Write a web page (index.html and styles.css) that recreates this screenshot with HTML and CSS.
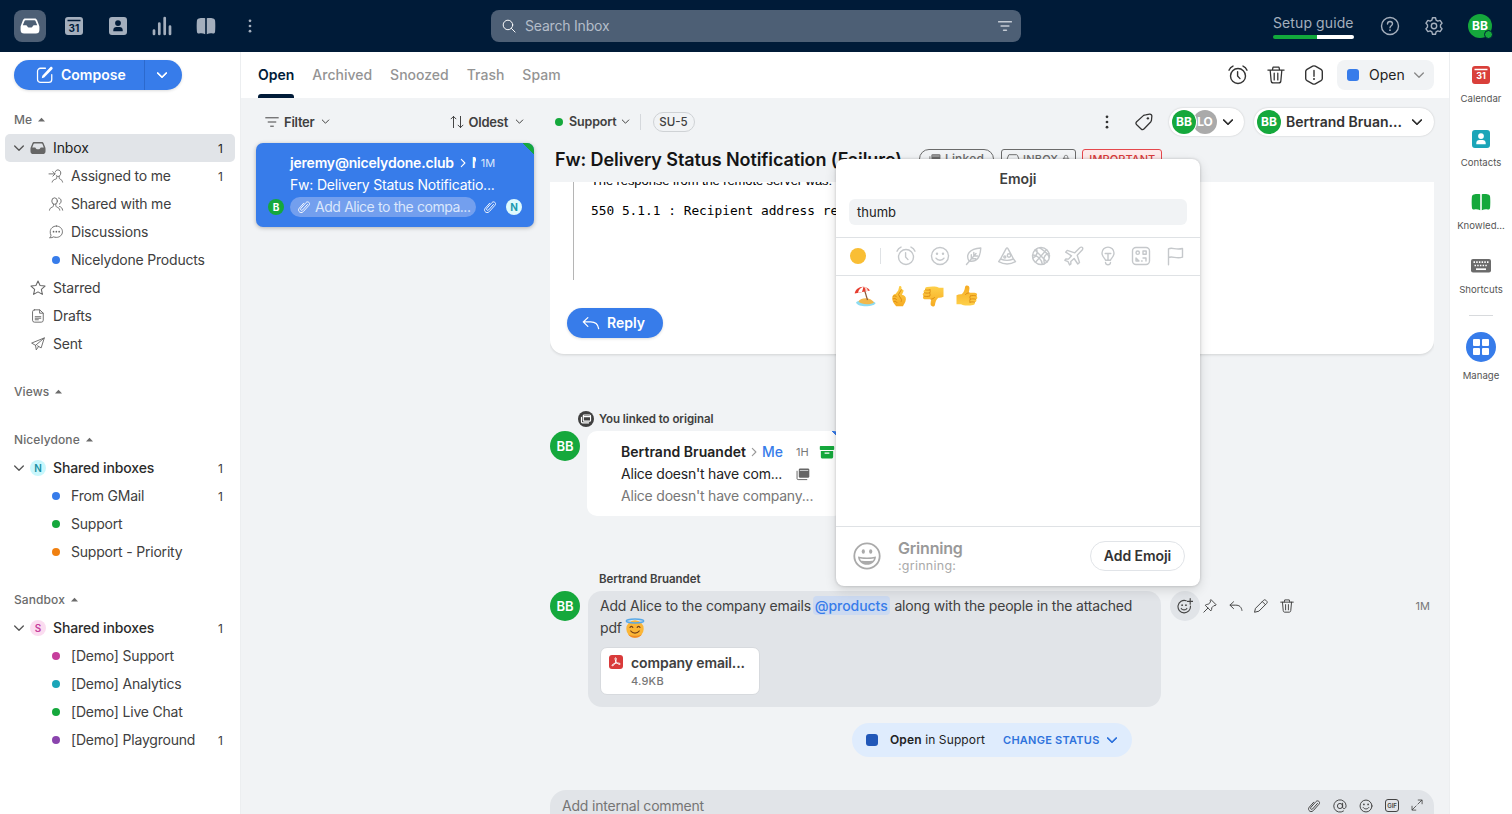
FILE: index.html
```
<!DOCTYPE html>
<html lang="en">
<head>
<meta charset="utf-8">
<title>Inbox</title>
<link rel="stylesheet" href="styles.css">
</head>
<body>
<svg class="defs" width="0" height="0">
  <linearGradient id="skin" x1="0" y1="0" x2="0" y2="1"><stop offset="0" stop-color="#fed04a"/><stop offset="1" stop-color="#f6ab22"/></linearGradient>
  <symbol id="chev" viewBox="0 0 10 10"><path class="cv" d="M1.400 3.300 5 6.900l3.600-3.600"/></symbol>
  <symbol id="caret" viewBox="0 0 8 5"><path class="f" d="M.5 4.600 4 .7l3.500 3.900z"/></symbol>
  <symbol id="tray" viewBox="0 0 20 20"><path class="f" fill-rule="evenodd" d="M5.200 2.500h9.600c1 0 1.800.6 2.200 1.500l2 5.200c.3.600.4 1.200.4 1.800v3a3.500 3.500 0 0 1-3.500 3.500H4.100A3.500 3.500 0 0 1 .6 14v-3c0-.6.1-1.200.4-1.800L3 4c.4-.9 1.200-1.500 2.200-1.500zm.3 1.800c-.5 0-.8.3-1 .7L2.800 9.300h3c.9 0 1.300.6 1.600 1.200.3.700.8 1 1.400 1h2.400c.6 0 1.100-.3 1.400-1 .3-.6.7-1.200 1.600-1.200h3L15.500 5c-.2-.4-.5-.7-1-.7z"/></symbol>
  <symbol id="cal" viewBox="0 0 20 20"><path class="f" fill-rule="evenodd" d="M4 1h12a3 3 0 0 1 3 3v12a3 3 0 0 1-3 3H4a3 3 0 0 1-3-3V4a3 3 0 0 1 3-3zM3.500 3.800v1.400h13V3.800z"/></symbol>
  <symbol id="contact" viewBox="0 0 20 20"><path class="f" fill-rule="evenodd" d="M4 1h12a3 3 0 0 1 3 3v12a3 3 0 0 1-3 3H4a3 3 0 0 1-3-3V4a3 3 0 0 1 3-3zm6 3.200a2.900 2.900 0 1 0 0 5.800 2.900 2.900 0 0 0 0-5.800zM5.300 15.300h9.400v-1.200c0-1.800-1.300-3-3-3H8.300c-1.700 0-3 1.200-3 3z"/></symbol>
  <symbol id="bars" viewBox="0 0 20 20"><path d="M2 14.500v3.500M7.300 7.500V18M12.700 2v16M18 10.500V18"/></symbol>
  <symbol id="book" viewBox="0 0 20 20"><path class="f" d="M9.200 2.300v15.900c-1.800-.8-3.800-1-6-.7C1.700 17.700 1.100 17 .9 15.500.6 12 .6 8 .9 4.800c.1-1.300.8-2.200 2-2.400 2.300-.4 4.700-.5 6.300-.1zM10.800 2.300v15.900c1.800-.8 3.800-1 6-.7 1.500.2 2.100-.5 2.300-2 .3-3.500.3-7.500 0-10.700-.1-1.300-.8-2.200-2-2.400-2.300-.4-4.700-.5-6.300-.1z"/></symbol>
  <symbol id="dots" viewBox="0 0 20 20"><g class="f"><circle cx="10" cy="3.500" r="1.700"/><circle cx="10" cy="10" r="1.700"/><circle cx="10" cy="16.500" r="1.700"/></g></symbol>
  <symbol id="search" viewBox="0 0 20 20"><circle cx="8.500" cy="8.500" r="6.800"/><path d="m13.500 13.500 5.200 5.200"/></symbol>
  <symbol id="filter" viewBox="0 0 20 20"><path d="M1 4h18M4.500 10h11M8 16h4"/></symbol>
  <symbol id="help" viewBox="0 0 20 20"><circle cx="10" cy="10" r="8.500"/><path d="M7.500 8C7.500 6.500 8.500 5.500 10 5.500s2.500 1 2.500 2.300c0 2-2.500 2-2.500 4"/><circle class="f" cx="10" cy="14.200" r=".9"/></symbol>
  <symbol id="gear" viewBox="0 0 20 20"><path d="M8.500 1.800h3l.6 2.300 1.700 1 2.300-.7 1.900 2.800-1.500 1.700v2.200l1.500 1.700-1.900 2.800-2.300-.7-1.700 1-.6 2.300h-3l-.6-2.300-1.700-1-2.300.7L2 12.800l1.500-1.700V8.900L2 7.200l1.900-2.800 2.300.7 1.700-1z"/><circle cx="10" cy="10" r="2.700"/></symbol>
  <symbol id="compose" viewBox="0 0 20 20"><path d="M10.500 2.500H5A3.300 3.300 0 0 0 1.700 5.800V15A3.300 3.300 0 0 0 5 18.300h9.200a3.300 3.300 0 0 0 3.300-3.300V9.500"/><path class="f" d="m7 10.800 8.800-9.400c.6-.7 1.500-.7 2.200-.1.700.7.700 1.600.1 2.300l-9 9.100-2.700.9z"/></symbol>
  <symbol id="assign" viewBox="0 0 20 20"><path d="M9 4.200C9.500 2.300 10.900 1.300 12.700 1.300c2.400 0 4.100 1.800 4.100 4.400 0 2.900-1.700 5-3.900 5-1 0-1.900-.5-2.600-1.200M0 7h8.500M5.500 3.800 8.700 7l-3.200 3.200M4.500 18.700c.5-2.200 2.300-3.700 5-4.200 1.600-.3 1.800-1.500 1.400-3M14.600 11c-.3 2 .1 3.200 1.600 3.700 1.700.5 2.800 1.900 3.200 4"/></symbol>
  <symbol id="people" viewBox="0 0 20 20"><ellipse cx="8" cy="5.800" rx="4" ry="4.600"/><path d="M.7 18.800c.3-2.500 1.700-3.600 3.700-4.200 1.700-.5 2.200-1.500 2-4M9.700 10.600c-.2 2.500.3 3.500 2 4 2 .6 3.400 1.700 3.700 4.200M13.700 1.400c2.300.3 3.600 2 3.600 4.300 0 2.100-1 3.700-2.500 4.500M15 13.500c2.500.6 4 2.300 4.500 5.300"/></symbol>
  <symbol id="chat" viewBox="0 0 20 20"><path d="M10.500 1.500c4.900 0 8.700 3.500 8.700 8.100s-3.800 8.100-8.700 8.100c-1.500 0-2.700-.3-3.900-.8-1.300 1-3.200 1.500-5.800 1.300 1.400-1 2.100-2.300 2-3.800a8 8 0 0 1-1-4.800c0-4.600 3.800-8.100 8.700-8.100z"/><g class="f"><circle cx="6.500" cy="9.500" r="1.200"/><circle cx="10.500" cy="9.500" r="1.200"/><circle cx="14.500" cy="9.500" r="1.200"/></g></symbol>
  <symbol id="star" viewBox="0 0 20 20"><path d="m10 1.200 2.600 5.700 6.200.7-4.600 4.200 1.300 6.200-5.500-3.100L4.500 18l1.300-6.200L1.200 7.600l6.200-.7z"/></symbol>
  <symbol id="doc" viewBox="0 0 20 20"><path d="M5 1.200h7.500L17.500 6v10a2.800 2.800 0 0 1-2.800 2.800H5A2.800 2.800 0 0 1 2.200 16V4A2.800 2.800 0 0 1 5 1.200zM12.300 1.400V6h5M6 11h8M6 13.200h8M6 15.400h4.500"/></symbol>
  <symbol id="plane" viewBox="0 0 20 20"><path d="M19 1.300.9 8.700l5.600 3.200L19 1.300l-4.500 14.300-5.200-3M6.500 11.900l1 6.500 3.300-4.800"/></symbol>
  <symbol id="alarm" viewBox="0 0 20 20"><circle cx="10" cy="11" r="7.500"/><path d="M9.600 6.800V11l2.400 2.600M1 5.200C1.800 3.200 3.100 1.900 5 1.100M19 5.200c-.8-2-2.100-3.300-4-4.100"/></symbol>
  <symbol id="trash" viewBox="0 0 20 20"><path d="M1 4.500h18M6 4.500l.7-3.200h6.600l.7 3.200M3.500 4.500l1.100 12c.1 1.500.9 2.300 2.300 2.300h6.200c1.400 0 2.200-.8 2.300-2.300l1.100-12M8 8v7.500M12 8v7.500"/></symbol>
  <symbol id="spam" viewBox="0 0 20 20"><path d="M8.700 1.200 3 4.300c-.8.5-1.300 1.200-1.300 2.200v7c0 1 .5 1.700 1.300 2.200l5.700 3.100c.9.500 1.700.5 2.600 0l5.700-3.100c.8-.5 1.300-1.200 1.300-2.200v-7c0-1-.5-1.700-1.300-2.200l-5.700-3.100c-.9-.5-1.700-.5-2.600 0zM10 5.500v5.700"/><circle class="f" cx="10" cy="14" r="1"/></symbol>
  <symbol id="sort" viewBox="0 0 20 20"><path d="M5 18V2M1.500 5.500 5 2l3.500 3.500M15 2v16M11.500 14.500 15 18l3.500-3.500"/></symbol>
  <symbol id="clip" viewBox="0 0 20 20"><path d="m15 6.300-7 7.900c-1.600 1.700-4-.4-2.500-2.200l7.300-8.300c2.700-2.900 6.900.8 4.300 3.800l-8 9C5.400 20.500-.3 15.600 3.400 11.500L9.500 4.600"/></symbol>
  <symbol id="tag" viewBox="0 0 20 20"><path d="m11.800 2 4.400-.7c1.600-.2 2.700.9 2.500 2.500L18.300 8c-.1.800-.4 1.400-.9 2l-7.200 7.500c-1.100 1.100-2.300 1.200-3.400.2l-4.900-4.600c-1.100-1.100-1.100-2.300-.1-3.400l7.500-6.800c.7-.5 1.500-.8 2.500-.9z"/><circle class="f" cx="14.300" cy="5.900" r="1.300"/></symbol>
  <symbol id="reply" viewBox="0 0 20 20"><path d="M6.500 4 1.400 8.800l5.100 4.900M1.600 8.800h8.100c5 0 8 2.400 8.800 7.500"/></symbol>
  <symbol id="stack" viewBox="0 0 20 20"><path class="f" d="M6 2h11a2 2 0 0 1 2 2v9.500a2 2 0 0 1-2 2H6a2 2 0 0 1-2-2V4a2 2 0 0 1 2-2z"/><path class="cut" d="M6 5h11"/><path d="M1.500 6v10.500c0 1 .6 1.500 1.500 1.500h12.500"/></symbol>
  <symbol id="link" viewBox="0 0 20 20"><circle class="f" cx="10" cy="10" r="10"/><path class="w" d="M7.800 5h6.700c.8 0 1.200.5 1.200 1.200v5.300c0 .8-.5 1.200-1.200 1.200H7.800c-.8 0-1.200-.5-1.200-1.200V6.200C6.600 5.400 7.100 5 7.800 5zM4.300 8v5.500c0 .8.500 1.300 1.300 1.300h7.700M7 7h8.500"/></symbol>
  <symbol id="archive" viewBox="0 0 20 20"><path class="f" fill-rule="evenodd" d="M2 2.500h16c.7 0 1 .4 1 1v3c0 .6-.3 1-1 1H2c-.7 0-1-.4-1-1v-3c0-.6.300-1 1-1zM2.300 8.800h15.400v7c0 1.400-.8 2.200-2.200 2.200h-11c-1.400 0-2.200-.8-2.200-2.200zM7 10.500v1.800h6v-1.800z"/></symbol>
  <symbol id="smile" viewBox="0 0 20 20"><circle cx="10" cy="10" r="8.500"/><path d="M6 12.200c1.700 2.800 6.300 2.800 8 0"/><g class="f"><circle cx="7" cy="7.800" r="1.200"/><circle cx="13" cy="7.800" r="1.200"/></g></symbol>
  <symbol id="leaf" viewBox="0 0 20 20"><path d="M3.500 18.500 13 7.500M6 15C2.500 9 6 2.800 17.800 2 17.300 11 14 16.500 6 15zM8.300 8.800v3.900l4.300.1M10.800 6.500V10h3.700"/></symbol>
  <symbol id="pizza" viewBox="0 0 20 20"><path d="M9 2.800c.7-1.200 1.400-1.200 2.100 0L16.500 13c-4.200 1.800-8.800 1.800-13 0zM3.500 13l-1.800 2.600c5.200 2.900 11.600 2.900 16.800 0L16.500 13"/><circle cx="12" cy="9.500" r="1.700"/><circle cx="7.800" cy="11" r="1"/></symbol>
  <symbol id="ball" viewBox="0 0 20 20"><circle cx="10" cy="10" r="8.500"/><path d="m4 4 12 12M15.500 3.700 4.500 16.300M8.500 1.700C13.500 5 17.800 9.500 18.300 11.500M1.700 9C6 9 10.800 13 11.300 18.300M5.500 3C7 7 6 10 1.700 12M18.100 7.500c-4.700.5-6.100 4.800-4.600 10.200"/></symbol>
  <symbol id="jet" viewBox="0 0 20 20"><path d="m10.800 6.800 4.500-4.600c1.200-1.200 2.600-1.300 3.100-.8.600.6.500 2-.7 3.200l-4.500 4.600 2.300 7.300-1.700 1.500-3.700-5.500-3.300 3 .1 2.400-1.300 1-1.500-3.200-3.200-1.400 1-1.300 2.600.1 3-3.300-5.800-3.700 1.500-1.700z"/></symbol>
  <symbol id="bulb" viewBox="0 0 20 20"><path d="M7.500 14.200c0-1.500-3.500-3-3.500-7.100a6 6 0 0 1 12 0c0 4.100-3.500 5.600-3.500 7.100zM7.500 16.500c.3 3 4.700 3 5 0M7.200 7.500h5.600M10 7.500v6.500"/></symbol>
  <symbol id="symbols" viewBox="0 0 20 20"><rect x="1.500" y="1.500" width="17" height="17" rx="3.500"/><circle cx="6.700" cy="6.700" r="1.700"/><rect x="12" y="5" width="3.200" height="3.200"/><path d="M5 12v3h3zM12 12h3v3M10.500 15h.7"/></symbol>
  <symbol id="flag" viewBox="0 0 20 20"><path d="M3.500 18.800V2.800c4-2 7 1.600 14-.3v8.700c-6.500 1.900-10-1.500-14 .3"/></symbol>
  <symbol id="addsmile" viewBox="0 0 20 20"><path d="M11.500 3.400A7.800 7.800 0 1 0 16.800 10"/><path d="M5.300 13c1.300 2.500 5.700 2.500 7 0M13 4.200h7M16.500.7v7"/><g class="f"><circle cx="6.400" cy="9" r="1.100"/><circle cx="11.200" cy="9" r="1.100"/></g></symbol>
  <symbol id="pin" viewBox="0 0 20 20"><path d="m11.700 1.200 7.100 7.100-1.600 1.200-1.500-.2-3.200 3.200c.2 1.700-.2 3.200-1.300 4.500L3.200 9c1.300-1.200 2.800-1.500 4.500-1.400l3-3.400-.2-1.600zM7 13 1.200 18.800"/></symbol>
  <symbol id="pencil" viewBox="0 0 20 20"><path d="M2.500 13 13.600 1.900c1-1 2.300-1 3.300-.1l1.200 1.200c1 1 1 2.300 0 3.300L7 17.400l-5.700 1.400zM12 3.800l4.200 4.200"/></symbol>
  <symbol id="at" viewBox="0 0 20 20"><circle cx="10" cy="10" r="3.700"/><path d="M13.700 6v5.500c0 3.300 5 3.300 5-1.800A8.800 8.800 0 1 0 15 17.200"/></symbol>
  <symbol id="expand" viewBox="0 0 20 20"><path d="M11.500 8.500 18 2M12 1.700h6.500V8M8.500 11.500 2 18M1.700 12v6.500H8"/></symbol>
  <symbol id="keyboard" viewBox="0 0 20 14"><path class="f" d="M2 0h16a2 2 0 0 1 2 2v9.500a2 2 0 0 1-2 2H2a2 2 0 0 1-2-2V2a2 2 0 0 1 2-2z"/><path class="keys" d="M2.500 3.200h15M3.500 6.500h13"/><path class="space" d="M5 10.200h10"/></symbol>
  <symbol id="lock" viewBox="0 0 20 20"><rect x="4" y="8.500" width="12" height="9.500" rx="1.500"/><path d="M6.500 8.500V6a3.500 3.500 0 0 1 7 0v2.500M10 12v2.500"/></symbol>
  <symbol id="trayline" viewBox="0 0 20 16"><path d="M4.800 1h10.400l1.300.9L19 8.500V13c0 1.300-.7 2-2 2H3c-1.300 0-2-.7-2-2V8.500l2.500-6.600zM1 8.500h4.500c1 0 1 2.500 2 2.500h5c1 0 1-2.500 2-2.500H19"/></symbol>
  <symbol id="thumb" viewBox="0 0 22 22"><path d="M21.500 11.800c-1.800.9-3.600 1.100-5 .9-1.700 1.200-2.700 3-3.200 5.200l-.4 2.300c-.7 1.900-4.200 1.500-4.300-.9-.1-1.700.3-3.500.7-5H3.500C1 14.300.2 12.300 1.600 11 .2 9.900.5 8.200 2 7.700 1.100 6.400 1.800 5 3.200 4.800 2.800 3.200 3.700 2.100 5 2c3-.5 6.500-.9 9.300-.2 1.500.4 2.500 1 4 1h3.200z" fill="url(#skin)"/><path d="M2 11.100c1.700.6 3.800.5 5.500 0M2.500 7.800c1.700.5 3.700.4 5.200 0M3.500 4.900c1.500.4 3.200.3 4.700-.1M9 14.200c1.500-.1 2.700-.7 3.500-1.700M7.500 11.200c.9-.6.900-2.300 0-3.200.9-.8 1-2.300.4-3.100" fill="none" stroke="#d98912" stroke-width=".9" stroke-linecap="round"/></symbol>
</svg>

<header class="topbar">
  <nav class="apps">
    <a class="app on"><svg class="i s20"><use href="#tray"/></svg></a>
    <a class="app cal"><svg class="i s20"><use href="#cal"/></svg><b>31</b></a>
    <a class="app"><svg class="i s20"><use href="#contact"/></svg></a>
    <a class="app chart"><svg class="i s20"><use href="#bars"/></svg></a>
    <a class="app"><svg class="i s20"><use href="#book"/></svg></a>
    <a class="app"><svg class="i s16"><use href="#dots"/></svg></a>
  </nav>
  <div class="search"><svg class="i s14"><use href="#search"/></svg><span>Search Inbox</span><svg class="i s14 flt"><use href="#filter"/></svg></div>
  <div class="account">
    <div class="guide"><span>Setup guide</span><i></i></div>
    <svg class="i s20"><use href="#help"/></svg>
    <svg class="i s20"><use href="#gear"/></svg>
    <div class="avatar me">BB<i></i></div>
  </div>
</header>

<div class="shell">
  <aside class="sidebar">
    <div class="compose"><div class="c-main"><svg class="i s18"><use href="#compose"/></svg>Compose</div><div class="c-more"><svg class="i s12 bold"><use href="#chev"/></svg></div></div>
    <h4 class="first">Me <svg class="car"><use href="#caret"/></svg></h4>
    <a class="row sel"><svg class="i s12 tw"><use href="#chev"/></svg><svg class="i s16 ico"><use href="#tray"/></svg><span>Inbox</span><em>1</em></a>
    <a class="row sub"><svg class="i s14 ico"><use href="#assign"/></svg><span>Assigned to me</span><em>1</em></a>
    <a class="row sub"><svg class="i s14 ico"><use href="#people"/></svg><span>Shared with me</span></a>
    <a class="row sub"><svg class="i s14 ico"><use href="#chat"/></svg><span>Discussions</span></a>
    <a class="row sub"><i class="dot blue"></i><span>Nicelydone Products</span></a>
    <a class="row mid"><svg class="i s16 ico"><use href="#star"/></svg><span>Starred</span></a>
    <a class="row mid"><svg class="i s14 ico"><use href="#doc"/></svg><span>Drafts</span></a>
    <a class="row mid"><svg class="i s14 ico"><use href="#plane"/></svg><span>Sent</span></a>
    <h4>Views <svg class="car"><use href="#caret"/></svg></h4>
    <h4>Nicelydone <svg class="car"><use href="#caret"/></svg></h4>
    <a class="row strong"><svg class="i s12 tw"><use href="#chev"/></svg><b class="team cyan">N</b><span>Shared inboxes</span><em>1</em></a>
    <a class="row sub"><i class="dot blue"></i><span>From GMail</span><em>1</em></a>
    <a class="row sub"><i class="dot green"></i><span>Support</span></a>
    <a class="row sub"><i class="dot orange"></i><span>Support - Priority</span></a>
    <h4>Sandbox <svg class="car"><use href="#caret"/></svg></h4>
    <a class="row strong"><svg class="i s12 tw"><use href="#chev"/></svg><b class="team pink">S</b><span>Shared inboxes</span><em>1</em></a>
    <a class="row sub"><i class="dot magenta"></i><span>[Demo] Support</span></a>
    <a class="row sub"><i class="dot teal"></i><span>[Demo] Analytics</span></a>
    <a class="row sub"><i class="dot green"></i><span>[Demo] Live Chat</span></a>
    <a class="row sub"><i class="dot purple"></i><span>[Demo] Playground</span><em>1</em></a>
  </aside>

  <main class="main">
    <div class="tabs">
      <nav><a class="on">Open</a><a>Archived</a><a>Snoozed</a><a>Trash</a><a>Spam</a></nav>
      <div class="tools"><svg class="i s20"><use href="#alarm"/></svg><svg class="i s18"><use href="#trash"/></svg><svg class="i s20"><use href="#spam"/></svg>
        <div class="state"><i></i><span>Open</span><svg class="i s12"><use href="#chev"/></svg></div></div>
    </div>
    <div class="panes">
      <section class="list">
        <div class="list-head">
          <span><svg class="i s14"><use href="#filter"/></svg>Filter<svg class="i s9"><use href="#chev"/></svg></span>
          <span><svg class="i s14"><use href="#sort"/></svg>Oldest<svg class="i s9"><use href="#chev"/></svg></span>
        </div>
        <article class="mail">
          <div class="corner"></div>
          <div class="l1"><b>jeremy@nicelydone.club</b><svg class="i s10 gt"><use href="#chev"/></svg><b class="cutoff">N</b><small>1M</small></div>
          <div class="l2">Fw: Delivery Status Notificatio...</div>
          <div class="l3"><b class="mini">B</b><span class="chip"><svg class="i s14"><use href="#clip"/></svg>Add Alice to the compa...</span><svg class="i s14"><use href="#clip"/></svg><b class="mini n">N</b></div>
        </article>
      </section>

      <section class="conv">
        <div class="conv-head">
          <i class="dot green"></i><span class="box">Support</span><svg class="i s9"><use href="#chev"/></svg><i class="sep"></i><span class="id">SU-5</span>
          <div class="right">
            <svg class="i s16"><use href="#dots"/></svg><svg class="i s18"><use href="#tag"/></svg>
            <div class="pill p1"><span class="avatar a24">BB</span><span class="avatar a24 lo">LO</span><svg class="i s12 bold"><use href="#chev"/></svg></div>
            <div class="pill p2"><span class="avatar a24">BB</span><span class="nm">Bertrand Bruan...</span><svg class="i s12 bold"><use href="#chev"/></svg></div>
          </div>
        </div>
        <div class="subject"><h1>Fw: Delivery Status Notification (Failure)</h1>
          <span class="lbl round"><svg class="i s12"><use href="#stack"/></svg>Linked</span>
          <span class="lbl"><svg class="i tl"><use href="#trayline"/></svg>INBOX<svg class="i s10"><use href="#lock"/></svg></span>
          <span class="lbl red">IMPORTANT</span></div>
        <div class="thread">
          <article class="message">
            <blockquote><p>The response from the remote server was:</p><pre>550 5.1.1 : Recipient address re</pre></blockquote>
            <button class="reply"><svg class="i s18"><use href="#reply"/></svg>Reply</button>
          </article>
          <div class="event"><svg class="i s16"><use href="#link"/></svg>You linked to original</div>
          <div class="entry">
            <span class="avatar a30">BB</span>
            <div class="linked">
              <div class="corner"></div>
              <div class="r1"><b>Bertrand Bruandet</b><svg class="i s10 gt"><use href="#chev"/></svg><span class="bl">Me</span><small>1H</small><svg class="i s16 gr"><use href="#archive"/></svg></div>
              <div class="r2">Alice doesn't have com...<svg class="i s14"><use href="#stack"/></svg></div>
              <div class="r3">Alice doesn't have company...</div>
            </div>
          </div>
          <div class="author">Bertrand Bruandet</div>
          <div class="entry">
            <span class="avatar a30">BB</span>
            <div class="bubble">
              <p>Add Alice to the company emails <mark>@products</mark> along with the people in the attached pdf <svg class="angel" viewBox="0 0 20 20"><circle cx="10" cy="11" r="8.700" fill="#fbb637"/><path d="M3 16.200c3.500 4.700 10.500 4.700 14 0-4 2-10 2-14 0z" fill="#f08a28"/><ellipse cx="10" cy="3" rx="8.700" ry="1.900" fill="none" stroke="#58a9e8" stroke-width="1.500"/><path d="M5 9.500c.5-1.500 2.300-1.500 2.800 0M12.200 9.500c.5-1.500 2.300-1.500 2.800 0M5.800 13c1.800 2.700 6.600 2.700 8.400 0" fill="none" stroke="#754218" stroke-width="1.200" stroke-linecap="round"/></svg></p>
              <div class="file"><svg class="pdf" viewBox="0 0 14 14"><rect width="14" height="14" rx="3" fill="#d93a3a"/><path d="M6.400 2.800c1.400-.3.800 2.500.2 4.200C5.800 9 4 11.400 3.100 10.700c-1-1 3-2.700 5-2.700 1.800 0 3.300.4 3.100 1.100-.3 1-2.900-.5-3.900-1.800-.8-1.200-1.800-4.200-.9-4.500z" fill="none" stroke="#fff"/></svg><div><b>company email...</b><small>4.9KB</small></div></div>
            </div>
            <div class="acts"><span class="hot"><svg class="i s16"><use href="#addsmile"/></svg></span><svg class="i s14"><use href="#pin"/></svg><svg class="i s14"><use href="#reply"/></svg><svg class="i s14"><use href="#pencil"/></svg><svg class="i s14"><use href="#trash"/></svg></div>
            <small class="ago">1M</small>
          </div>
          <div class="status"><i></i><span><b>Open</b> in Support</span><strong>CHANGE STATUS</strong><svg class="i s12 bold"><use href="#chev"/></svg></div>
        </div>
        <div class="composer"><span>Add internal comment</span><svg class="i s14"><use href="#clip"/></svg><svg class="i s14"><use href="#at"/></svg><svg class="i s14"><use href="#smile"/></svg><b class="gif">GIF</b><svg class="i s12"><use href="#expand"/></svg></div>
      </section>
    </div>
  </main>

  <aside class="rail">
    <a class="cal"><svg class="i s20 c-red"><use href="#cal"/></svg><b>31</b><span>Calendar</span></a>
    <a><svg class="i s20 c-teal"><use href="#contact"/></svg><span>Contacts</span></a>
    <a><svg class="i s20 c-green"><use href="#book"/></svg><span>Knowled...</span></a>
    <a><svg class="i s20 c-gray"><use href="#keyboard"/></svg><span>Shortcuts</span></a>
    <hr>
    <a class="manage"><i><u></u><u></u><u></u><u></u></i><span>Manage</span></a>
  </aside>
</div>

<div class="picker">
  <h3>Emoji</h3>
  <div class="query">thumb</div>
  <div class="cats"><i></i><s></s>
    <svg class="i s20"><use href="#alarm"/></svg><svg class="i s20"><use href="#smile"/></svg><svg class="i s20"><use href="#leaf"/></svg><svg class="i s20"><use href="#pizza"/></svg><svg class="i s20"><use href="#ball"/></svg><svg class="i s20"><use href="#jet"/></svg><svg class="i s20"><use href="#bulb"/></svg><svg class="i s20"><use href="#symbols"/></svg><svg class="i s20"><use href="#flag"/></svg></div>
  <div class="results">
    <svg viewBox="0 0 22 22"><path d="M2 17.500C4 14 18 14 21.500 18c0 3.500-17 5.500-19.500-.5z" fill="#8edcf2"/><path d="M4.500 16.500c2.500-4.500 12.500-4.500 15.500 1-3 2.500-12.500 2.500-15.500-1z" fill="#f2b84b"/><path d="m10.500 5 3 10" stroke="#8a5a35" stroke-width="1.200"/><path d="M.7 8.500C1 3 10.500-2 16 5.500z" fill="#e63c2e"/><path d="M4 7.700C4.500 4.500 7 2.300 9.500 1.700L8 7z" fill="#fff"/><path d="M11.500 6.300c.2-2-.5-3.800-2-4.600 2.500 0 4 1.500 4.500 4.200z" fill="#fbd9cf"/></svg>
    <svg viewBox="0 0 22 22"><path d="M11.300 1.200c1-.7 2.200-.1 2.200 1.300l-.1 2.200c1-.9 2.700.3 2 1.700l-1.500 3.300c2.500.3 4.200 2 4 4.500-.2 3.300-2.200 5-2.900 7H8.200c-1.500-2-3.800-4-4-7.500C4 10.500 5.700 9 7.500 9l2.700-3.500z" fill="url(#skin)"/><path d="m13.400 4.700-2.900 4.800 1.500 2.800M5.500 11.200c1.200-.8 2.300-.5 3 .6M5.200 13.800c1.500-.7 2.700-.3 3.300.8M6 16.500c1.300-.6 2.500 0 3 1M12 12.300c1.500 1 1.800 2.700 1.200 4.200" fill="none" stroke="#d98912" stroke-width=".9" stroke-linecap="round"/></svg>
    <svg><use href="#thumb"/></svg>
    <svg class="up"><use href="#thumb"/></svg>
  </div>
  <footer><svg class="grin" viewBox="0 0 28 28"><circle cx="14" cy="14" r="12.700" fill="none" stroke="#aaa" stroke-width="1.800"/><ellipse cx="10.300" cy="9.500" rx="1.600" ry="2.200" fill="#aaa"/><ellipse cx="17.700" cy="9.500" rx="1.600" ry="2.200" fill="#aaa"/><path d="M5 14.500c5.500 1.300 12.500 1.300 18 0-.2 5-4.200 8.300-9 8.300s-8.800-3.300-9-8.300z" fill="#aaa"/><path d="M7 16.400c4.500.8 9.500.8 14 0-.3 1.700-1.200 2.300-2 2.400-3.300.4-6.700.4-10 0-.8-.1-1.700-.7-2-2.400z" fill="#fff"/></svg>
    <div class="g"><b>Grinning</b><span>:grinning:</span></div><button>Add Emoji</button></footer>
</div>
</body>
</html>
```
FILE: styles.css
```
* { box-sizing: border-box; }
body { margin: 0; width: 1512px; height: 814px; overflow: hidden; font: 14px/20px Inter, "Liberation Sans", sans-serif; color: #333; background: #f1f3f5; }
a { color: inherit; }
h1, h3, h4, p, pre, blockquote { margin: 0; }
b, strong { font-weight: 600; }
i, em { font-style: normal; }
.defs { position: absolute; }
svg { display: block; flex: none; }
.i { fill: none; stroke: currentColor; stroke-width: 1.4; stroke-linecap: round; stroke-linejoin: round; }
.f { fill: currentColor; stroke: none; }
.cv { stroke-width: 1.1px; }
.bold { filter: drop-shadow(0 0 .3px currentColor); }
.cut { stroke: #f1f3f5; stroke-width: 1; }
.w { stroke: #fff; stroke-width: 1.4; }
.keys { stroke: #fff; stroke-width: 1.7; stroke-dasharray: 1.500 1.200; stroke-linecap: butt; }
.space { stroke: #fff; stroke-width: 1.7; stroke-linecap: butt; }
.s9 { width: 9px; height: 9px; }
.s10 { width: 10px; height: 10px; }
.s12 { width: 12px; height: 12px; }
.s14 { width: 14px; height: 14px; }
.s16 { width: 16px; height: 16px; }
.s18 { width: 18px; height: 18px; }
.s20 { width: 20px; height: 20px; }
.gt { transform: rotate(-90deg); }

.topbar { height: 52px; background: #001b38; display: flex; align-items: center; padding: 0 20px 0 14px; color: #a4afbd; }
.apps { display: flex; gap: 12px; width: 477px; }
.app { width: 32px; height: 32px; border-radius: 8px; display: flex; align-items: center; justify-content: center; position: relative; }
.app.on { background: #4d5f75; color: #fff; }
.chart .i { stroke-width: 2.700; }
.app.cal b { position: absolute; top: 8px; left: 0; width: 32px; text-align: center; font-size: 10px; font-weight: 700; color: #001b38; }
.search { width: 530px; height: 32px; border-radius: 8px; background: #4d5f75; display: flex; align-items: center; padding: 0 9px 0 11px; }
.search .i { color: #fff; }
.search span { margin-left: 9px; flex: 1; color: #b4bdc9; letter-spacing: -.2px; }
.search .flt { color: #c5ccd5; stroke-width: 2.300; }
.account { margin-left: auto; display: flex; align-items: center; gap: 24px; }
.guide { width: 81px; margin-right: 2px; line-height: 18px; white-space: nowrap; letter-spacing: .1px; }
.guide i { display: block; height: 4px; margin-top: 3px; border-radius: 2px; background: linear-gradient(90deg, #12a93c 54%, #fff 54%); }
.avatar { border-radius: 50%; background: #15a83c; color: #fff; font-weight: 600; display: flex; align-items: center; justify-content: center; flex: none; }
.me { width: 24px; height: 24px; font-size: 12px; font-weight: 700; position: relative; }
.me i { position: absolute; right: -1px; bottom: -1px; width: 9px; height: 9px; border-radius: 50%; background: #15a83c; border: 1.500px solid #001b38; }
.a24 { width: 24px; height: 24px; font-size: 12px; font-weight: 700; }
.a30 { width: 30px; height: 30px; font-size: 13px; }

.shell { display: flex; height: 762px; }
.sidebar { width: 241px; background: #fff; border-right: 1px solid #eceef0; padding: 8px 5px 0; }
.compose { margin-left: 9px; width: 168px; height: 30px; border-radius: 15px; background: #377cea; color: #fff; display: flex; font-weight: 600; box-shadow: 0 1px 3px #0002; }
.c-main { width: 131px; padding-left: 22px; display: flex; align-items: center; gap: 7px; border-right: 1px solid #2c69cd; }
.c-more { flex: 1; padding-right: 4px; display: flex; align-items: center; justify-content: center; }
.sidebar h4 { height: 28px; margin: 20px 0 0 9px; display: flex; align-items: center; gap: 5px; font-size: 12px; font-weight: 500; color: #6b6b6b; letter-spacing: .1px; }
.sidebar h4.first { margin-top: 16px; }
.car { width: 9px; height: 5px; margin-top: -1px; }
.row { height: 28px; display: flex; align-items: center; padding: 0 12px 0 8px; border-radius: 5px; color: #404040; }
.row span { flex: 1; white-space: nowrap; letter-spacing: -.2px; }
.row em { font-size: 12px; padding-top: 1px; }
.row .tw { margin-right: 5px; color: #555; }
.row .ico { width: 16px; margin-right: 7px; color: #666; stroke-width: 1.3; }
.row.sub { padding-left: 43px; }
.row.mid { padding-left: 25px; }
.row.strong span { font-weight: 500; color: #2b2b2b; letter-spacing: -.15px; }
.row.sel { background: #e1e4e8; color: #222; }
.row.sel span { letter-spacing: -.1px; }
.dot { width: 8px; height: 8px; border-radius: 50%; flex: none; }
.row .dot { margin: 0 11px 0 4px; }
.blue { background: #377cea; } .green { background: #15a83c; } .orange { background: #f08010; }
.magenta { background: #c63e9c; } .teal { background: #1ba5b8; } .purple { background: #8a44ad; }
.team { width: 16px; height: 16px; border-radius: 50%; font-size: 10px; line-height: 16px; text-align: center; margin-right: 7px; }
.cyan { background: #c9f7fc; color: #1a8fa3; } .pink { background: #fbdcf0; color: #c63e9c; }

.main { width: 1208px; display: flex; flex-direction: column; }
.tabs { height: 46px; background: #fff; display: flex; justify-content: space-between; padding: 0 15px 0 17px; }
.tabs nav { display: flex; gap: 18px; font-weight: 500; color: #949494; line-height: 46px; }
.tabs .on { color: #001b38; font-weight: 600; position: relative; }
.tabs .on::after { content: ""; position: absolute; left: 0; right: 0; bottom: 0; height: 4px; border-radius: 3px 3px 0 0; background: #001b38; }
.tools { display: flex; align-items: center; gap: 19px; color: #333; }
.state { margin-left: -6px; width: 97px; height: 30px; border-radius: 8px; background: #f1f3f5; display: flex; align-items: center; padding-left: 10px; color: #222; }
.state i { width: 12px; height: 12px; border-radius: 3px; background: #377cea; margin-right: 10px; }
.state .i { margin-left: 8px; color: #888; }
.panes { flex: 1; display: flex; min-height: 0; }
.list { width: 309px; padding: 10px 16px 0 15px; }
.list-head { height: 27px; padding: 0 10px 0 9px; display: flex; justify-content: space-between; font-size: 13px; font-weight: 600; color: #404040; letter-spacing: -.25px; }
.list-head span { display: flex; align-items: center; gap: 5px; }
.list-head .s9 { margin-left: 2px; }
.mail { margin-top: 8px; height: 84px; border-radius: 7px; background: #377cea; color: #fff; position: relative; overflow: hidden; padding: 9px 0 0 12px; box-shadow: 0 1px 4px #0004; letter-spacing: -.2px; }
.corner { position: absolute; top: 0; right: 0; width: 12px; height: 12px; background: linear-gradient(45deg, transparent 50%, #15a83c 50%); }
.l1 { display: flex; align-items: center; padding-left: 22px; height: 22px; }
.l1 .gt { margin: 0 4px 0 4px; }
.cutoff { width: 4px; overflow: hidden; }
.l1 small { font-size: 11px; margin-left: 5px; color: #dbe7fc; letter-spacing: 0; }
.l2 { padding-left: 22px; height: 22px; line-height: 22px; }
.l3 { display: flex; align-items: center; height: 22px; }
.mini { width: 16px; height: 16px; border-radius: 50%; background: #15a83c; font-size: 10px; font-weight: 700; line-height: 16px; text-align: center; letter-spacing: 0; }
.mini.n { background: #defafd; color: #1a9ab0; margin-left: 9px; }
.l3 .s14 { stroke-width: 1.3; }
.chip { width: 186px; height: 20px; border-radius: 10px; background: #739fee; color: #dbe7fc; margin: 0 7px 0 6px; padding-left: 7px; display: flex; align-items: center; gap: 4px; white-space: nowrap; letter-spacing: -.55px; word-spacing: .4px; }
.chip { letter-spacing: -.5px; }
.chip .i { color: #fff; }

.conv { width: 884px; display: flex; flex-direction: column; overflow: hidden; margin: 0 -4px; padding: 0 4px; box-sizing: content-box; }
.conv-head { flex: none; height: 47px; padding-left: 5px; display: flex; align-items: center; color: #404040; font-size: 13px; font-weight: 600; }
.box { margin: 0 4px 0 6px; font-size: 12.500px; letter-spacing: -.15px; }
.sep { width: 1px; height: 16px; background: #d5d8dc; margin: 0 12px 0 10px; }
.id { height: 20px; width: 42px; border: 1px solid #cfd2d5; border-radius: 10px; font-size: 11.500px; font-weight: 500; line-height: 18px; text-align: center; }
.right { margin-left: auto; display: flex; align-items: center; color: #333; }
.right .s18 { margin: 0 16px 0 20px; }
.pill { height: 28px; border-radius: 14px; background: #fff; display: flex; align-items: center; padding-left: 3px; box-shadow: 0 0 2px #0003; }
.p1 { width: 75px; margin-right: 10px; }
.p1 .avatar:first-child { z-index: 1; box-shadow: 0 0 0 1px #fff; }
.avatar.lo { background: #aaa; margin: 0 5px 0 -3px; }
.p2 { width: 180px; }
.nm { flex: 1; margin-left: 5px; font-size: 14px; white-space: nowrap; }
.p2 .i { margin-right: 11px; }
.subject { flex: none; height: 37px; padding: 0 0 9px 5px; display: flex; align-items: center; }
h1 { font-size: 18px; line-height: 24px; font-weight: 600; color: #151515; margin: 2px 17px 0 0; white-space: nowrap; letter-spacing: -.09px; }
.lbl { height: 20px; border: 1px solid #6b6b6b; border-radius: 3px; font-size: 11px; font-weight: 500; color: #6b6b6b; display: flex; align-items: center; gap: 3px; padding: 0 4px; margin-right: 6px; letter-spacing: .2px; }
.round { border-radius: 10px; padding: 0 9px; font-size: 12px; margin-right: 7px; gap: 4px; }
.tl { width: 14px; height: 11px; }
.red { border-color: #e5484d; color: #d93a3a; background: #fdeaea; padding: 0 6px; letter-spacing: .1px; }
.thread { flex: none; height: 608px; overflow: hidden; }
.message { height: 172px; background: #fff; border-radius: 0 0 14px 14px; padding-left: 17px; box-shadow: 0 1px 3px #0002; overflow: hidden; }
blockquote { margin-left: 6px; border-left: 1px solid #b5b5b5; height: 98px; padding-left: 17px; color: #000; }
blockquote p { font-family: "Liberation Sans", sans-serif; font-size: 13px; height: 20px; line-height: 20px; transform: translateY(-11px); letter-spacing: -.1px; }
pre { font: 12.830px/18px "DejaVu Sans Mono", monospace; }
.reply { margin-top: 28px; width: 96px; height: 30px; border: 0; border-radius: 15px; background: #377cea; color: #fff; font: 600 14px/20px Inter, sans-serif; display: flex; align-items: center; gap: 7px; padding: 0 0 0 15px; box-shadow: 0 1px 3px #0002; }
.event { margin: 55px 0 0 28px; height: 20px; display: flex; align-items: center; gap: 5px; font-size: 11.500px; font-weight: 600; color: #404040; letter-spacing: -.05px; }
.entry { display: flex; }
.linked { margin: 2px 0 0 7px; width: 257px; height: 85px; border-radius: 10px; background: #fff; position: relative; padding: 10px 0 0 34px; color: #222; overflow: hidden; }
.linked .corner { background: linear-gradient(45deg, transparent 50%, #377cea 50%); width: 13px; height: 13px; }
.r1, .r2, .r3 { height: 22px; display: flex; align-items: center; white-space: nowrap; letter-spacing: -.21px; }
.r1 { letter-spacing: .03px; }
.r1 .gt { color: #999; margin: 0 3px; }
.bl { color: #377cea; font-weight: 500; }
.r1 small { font-size: 11px; color: #777; margin: 0 10px 0 13px; }
.gr { color: #15a83c; }
.r2 .i { margin-left: 14px; color: #666; }
.r3 { color: #777; }
.event + .entry { height: 140px; }
.event + .entry .avatar { margin-top: 2px; }
.author { margin: 0 0 2px 49px; height: 20px; font-size: 11.500px; font-weight: 600; color: #404040; letter-spacing: -.05px; }
.bubble { margin-left: 8px; width: 573px; height: 116px; border-radius: 14px; background: #e1e4e8; padding: 4px 12px; color: #404040; }
.bubble p { line-height: 22px; letter-spacing: -.18px; }
mark { color: #377cea; background: #ccdaf1; font-weight: 500; border-radius: 4px; padding: 1px 2px; margin: 0 1px 0 -2px; letter-spacing: -.05px; }
.angel { display: inline-block; width: 20px; height: 20px; vertical-align: -5px; margin-left: -1px; }
.file { margin-top: 8px; width: 160px; height: 48px; border: 1px solid #d7dade; border-radius: 7px; background: #fff; padding: 7px 8px; display: flex; gap: 8px; white-space: nowrap; }
.pdf { width: 14px; height: 14px; }
.file b, .file small { display: block; line-height: 16px; }
.file b { letter-spacing: -.13px; }
.file small { font-size: 11px; font-weight: 500; color: #777; line-height: 20px; letter-spacing: .2px; }
.acts { margin-left: 9px; height: 30px; display: flex; align-items: center; gap: 11.800px; color: #444; }
.hot { width: 30px; height: 30px; border-radius: 50%; background: #e1e4e8; display: flex; align-items: center; justify-content: center; margin-right: -9px; }
.ago { margin: 5px 4px 0 auto; font-size: 11px; color: #777; }
.status { margin: 16px auto 0 302px; width: 280px; height: 34px; border-radius: 17px; background: #dfecfd; display: flex; align-items: center; padding-left: 14px; font-size: 12px; color: #222; letter-spacing: .12px; }
.status i { width: 12px; height: 12px; border-radius: 3px; background: #2157b8; margin-right: 12px; }
.status strong { margin: 0 6px 0 18px; color: #2f73dc; font-size: 11px; letter-spacing: .25px; }
.status .i { color: #2f73dc; }
.composer { height: 40px; flex: none; border-radius: 16px; background: #e1e4e8; display: flex; align-items: flex-start; gap: 12px; padding: 6px 11px 0 12px; color: #757575; letter-spacing: -.2px; }
.composer span { flex: 1; }
.composer .i, .gif { margin-top: 3px; color: #444; }
.gif { width: 14px; height: 13px; border: 1px solid #444; border-radius: 3px; font-size: 6px; line-height: 11px; text-align: center; letter-spacing: 0; }

.rail { width: 63px; background: #fff; border-left: 1px solid #eceef0; padding-top: 13px; text-align: center; }
.rail a { display: flex; flex-direction: column; align-items: center; height: 63.500px; position: relative; font-size: 9.600px; color: #555; }
.rail span { margin-top: 4px; }
.rail b { position: absolute; top: 1px; color: #fff; font-size: 9px; font-weight: 700; }
.c-red { color: #d93f3a; } .c-teal { color: #1ba5b8; } .c-green { color: #15a83c; } .c-gray { color: #6b6b6b; }
.rail hr { width: 24px; border: 0; border-top: 1px solid #d8dadd; margin: -4px auto 16px; }
.manage i { width: 30px; height: 30px; border-radius: 50%; background: #377cea; display: grid; grid-template-columns: 7px 7px; gap: 2px; place-content: center; }
.manage u { height: 7px; background: #fff; border-radius: 1px; }

.picker { position: absolute; left: 836px; top: 159px; width: 364px; height: 427px; border-radius: 8px; background: #fff; box-shadow: 0 0 3px #0003, 0 4px 12px #0002; display: flex; flex-direction: column; }
h3 { height: 40px; text-align: center; font-size: 14px; line-height: 40px; font-weight: 600; color: #404040; }
.query { margin: 0 13px 12px; height: 26px; border-radius: 6px; background: #f1f3f5; padding: 3px 8px; font-size: 13px; color: #222; }
.cats { height: 39px; border: solid #dfe2e5; border-width: 1px 0; display: flex; align-items: center; gap: 13.600px; padding: 0 0 1px 14px; color: #c5c8cb; }
.cats i { width: 16px; height: 16px; border-radius: 50%; background: #f9be34; }
.cats s { width: 1px; height: 16px; background: #dfe2e5; margin-right: 2px; }
.results { flex: 1; padding: 9px 18px; display: flex; gap: 12px; }
.results svg { width: 22px; height: 22px; }
.up { transform: rotate(180deg); }
.picker footer { height: 60px; border-top: 1px solid #dfe2e5; display: flex; align-items: center; padding: 0 15px 2px 17px; }
.grin { width: 28px; height: 28px; }
.g { flex: 1; margin-left: 17px; color: #999; padding-top: 2px; }
.g b, .g span { display: block; font-size: 16px; line-height: 18px; letter-spacing: -.2px; }
.g span { font-size: 12.500px; line-height: 17px; color: #aaa; letter-spacing: .25px; }
.picker button { width: 95px; height: 30px; border: 1.500px solid #e1e4e8; border-radius: 15px; background: #fff; font: 600 14px/20px Inter, sans-serif; color: #333; padding: 0; letter-spacing: -.05px; }
```
